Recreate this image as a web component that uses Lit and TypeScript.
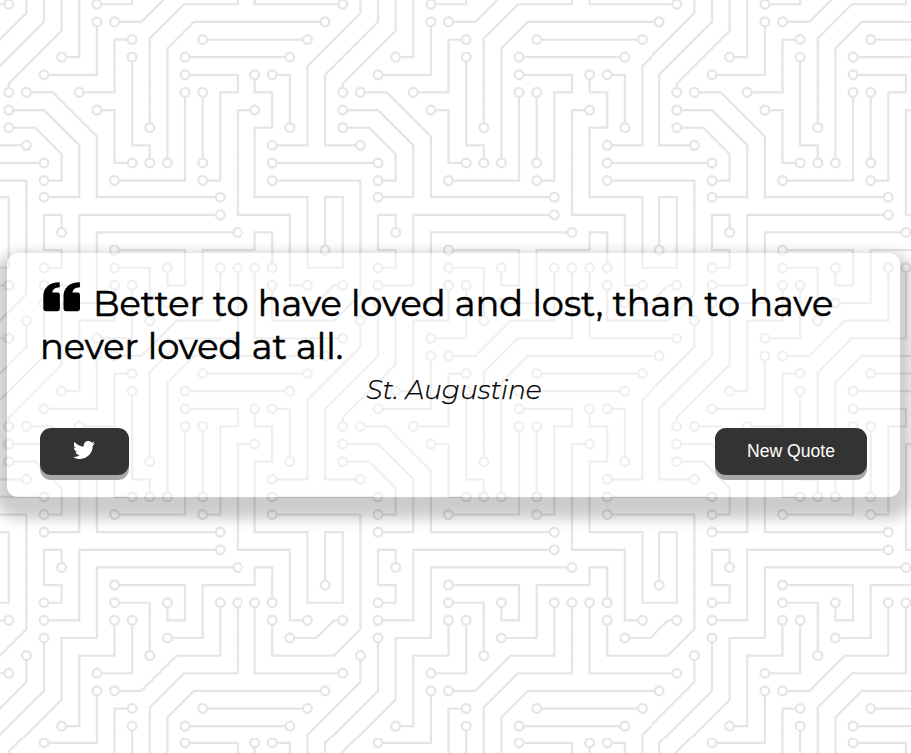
import { LitElement, html, css, unsafeCSS } from "lit";
import { customElement, property } from "lit/decorators.js";

// Circuit traces: 2px lines that end in 5px terminals, on a 304px tile.
const TRACES =
  "M44.1 224a5 5 0 1 1 0 2H0v-2h44.1zm160 48a5 5 0 1 1 0 2H82v-2h122.1zm57.8-46a5 5 0 1 1 0-2H304v2h-42.1zm0 16a5 5 0 1 1 0-2H304v2h-42.1zm6.2-114a5 5 0 1 1 0 2h-86.2a5 5 0 1 1 0-2h86.2zm-256-48a5 5 0 1 1 0 2H0v-2h12.1zm185.8 34a5 5 0 1 1 0-2h86.2a5 5 0 1 1 0 2h-86.2zM258 12.1a5 5 0 1 1-2 0V0h2v12.1zm-64 208a5 5 0 1 1-2 0v-54.2a5 5 0 1 1 2 0v54.2zm48-198.2V80h62v2h-64V21.9a5 5 0 1 1 2 0zm16 16V64h46v2h-48V37.9a5 5 0 1 1 2 0zm-128 96V208h16v12.1a5 5 0 1 1-2 0V210h-16v-76.1a5 5 0 1 1 2 0zm-5.9-21.9a5 5 0 1 1 0 2H114v48H85.9a5 5 0 1 1 0-2H112v-48h12.1zm-6.2 130a5 5 0 1 1 0-2H176v-74.1a5 5 0 1 1 2 0V242h-60.1zm-16-64a5 5 0 1 1 0-2H114v48h10.1a5 5 0 1 1 0 2H112v-48h-10.1zM66 284.1a5 5 0 1 1-2 0V274H50v30h-2v-32h18v12.1zM236.1 176a5 5 0 1 1 0 2H226v94h48v32h-2v-30h-48v-98h12.1zm25.8-30a5 5 0 1 1 0-2H274v44.1a5 5 0 1 1-2 0V146h-10.1zm-64 96a5 5 0 1 1 0-2H208v-80h16v-14h-42.1a5 5 0 1 1 0-2H226v18h-16v80h-12.1zm86.2-210a5 5 0 1 1 0 2H272V0h2v32h10.1zM98 101.9V146H53.9a5 5 0 1 1 0-2H96v-42.1a5 5 0 1 1 2 0zM53.9 34a5 5 0 1 1 0-2H80V0h2v34H53.9zm60.1 3.9V66H82v64H69.9a5 5 0 1 1 0-2H80V64h32V37.9a5 5 0 1 1 2 0zM101.9 82a5 5 0 1 1 0-2H128V37.9a5 5 0 1 1 2 0V82h-28.1zm16-64a5 5 0 1 1 0-2H146v44.1a5 5 0 1 1-2 0V18h-26.1zm102.2 270a5 5 0 1 1 0 2H98v14h-2v-16h124.1zM242 149.9V160h16v34h-16v62h48v48h-2v-46h-48v-66h16v-30h-16v-12.1a5 5 0 1 1 2 0zM53.9 18a5 5 0 1 1 0-2H64V2H48V0h18v18H53.9zm112 32a5 5 0 1 1 0-2H192V0h50v2h-48v48h-28.1zm-48-48a5 5 0 0 1-9.8-2h2.07a3 3 0 1 0 5.66 0H178v34h-18V21.9a5 5 0 1 1 2 0V32h14V2h-58.1zm0 96a5 5 0 1 1 0-2H137l32-32h39V21.9a5 5 0 1 1 2 0V66h-40.17l-32 32H117.9zm28.1 90.1a5 5 0 1 1-2 0v-76.51L175.59 80H224V21.9a5 5 0 1 1 2 0V82h-49.59L146 112.41v75.69zm16 32a5 5 0 1 1-2 0v-99.51L184.59 96H300.1a5 5 0 0 1 3.9-3.9v2.07a3 3 0 0 0 0 5.66v2.07a5 5 0 0 1-3.9-3.9H185.41L162 121.41v98.69zm-144-64a5 5 0 1 1-2 0v-3.51l48-48V48h32V0h2v50H66v55.41l-48 48v2.69zM50 53.9v43.51l-48 48V208h26.1a5 5 0 1 1 0 2H0v-65.41l48-48V53.9a5 5 0 1 1 2 0zm-16 16V89.41l-34 34v-2.82l32-32V69.9a5 5 0 1 1 2 0zM12.1 32a5 5 0 1 1 0 2H9.41L0 43.41V40.6L8.59 32h3.51zm265.8 18a5 5 0 1 1 0-2h18.69l7.41-7.41v2.82L297.41 50H277.9zm-16 160a5 5 0 1 1 0-2H288v-71.41l16-16v2.82l-14 14V210h-28.1zm-208 32a5 5 0 1 1 0-2H64v-22.59L40.59 194H21.9a5 5 0 1 1 0-2H41.41L66 216.59V242H53.9zm150.2 14a5 5 0 1 1 0 2H96v-56.6L56.6 162H37.9a5 5 0 1 1 0-2h19.5L98 200.6V256h106.1zm-150.2 2a5 5 0 1 1 0-2H80v-46.59L48.59 178H21.9a5 5 0 1 1 0-2H49.41L82 208.59V258H53.9zM34 39.8v1.61L9.41 66H0v-2h8.59L32 40.59V0h2v39.8zM2 300.1a5 5 0 0 1 3.9 3.9H3.83A3 3 0 0 0 0 302.17V256h18v48h-2v-46H2v42.1zM34 241v63h-2v-62H0v-2h34v1zM17 18H0v-2h16V0h2v18h-1zm273-2h14v2h-16V0h2v16zm-32 273v15h-2v-14h-14v14h-2v-16h18v1zM0 92.1A5.02 5.02 0 0 1 6 97a5 5 0 0 1-6 4.9v-2.07a3 3 0 1 0 0-5.66V92.1zM80 272h2v32h-2v-32zm37.9 32h-2.07a3 3 0 0 0-5.66 0h-2.07a5 5 0 0 1 9.8 0zM5.9 0A5.02 5.02 0 0 1 0 5.9V3.83A3 3 0 0 0 3.83 0H5.9zm294.2 0h2.07A3 3 0 0 0 304 3.83V5.9a5 5 0 0 1-3.9-5.9zm3.9 300.1v2.07a3 3 0 0 0-1.83 1.83h-2.07a5 5 0 0 1 3.9-3.9z";

// Punches a 3px hole, wound the other way, into the centre of each terminal.
const board = TRACES.replace(/a5 5 0 1 1 ?(-?\d+)[ ]?(-?\d+)/g, (arc, x, y) => {
  const cx = +x / 2 + 2.45 * +y;
  const cy = +y / 2 - 2.45 * +x;
  return `l${cx - 3} ${cy}a3 3 0 1 0 6 0a3 3 0 1 0-6 0l${3 - cx} ${-cy}${arc}`;
});

const tile = encodeURIComponent(
  `<svg xmlns="http://www.w3.org/2000/svg" viewBox="0 0 304 304" width="304" height="304" preserveAspectRatio="none"><path fill="#000" fill-opacity=".1" d="${board}"/></svg>`
);

@customElement("quote-card")
export class QuoteCard extends LitElement {
  @property({ attribute: false }) lines: string[] = [];
  @property() author = "";

  static styles = css`
    :host {
      display: block;
      box-sizing: border-box;
      height: 244px;
      padding: 29px 33px 22px;
      border-radius: 11px;
      background: rgba(255, 255, 255, 0.4);
      box-shadow: 0 11px 13px 11px rgba(0, 0, 0, 0.2);
      color: #000;
      font-family: Montserrat, Inter, sans-serif;
    }
    .quote {
      margin: 0;
      font-size: 35.2px;
      font-weight: 400;
      line-height: 43px;
      white-space: nowrap;
      -webkit-text-stroke: 0.6px #000;
    }
    .line {
      display: flex;
      height: 43px;
    }
    .mark {
      width: 37px;
      height: 30px;
      margin: 0 13px 0 3px;
      flex: none;
    }
    .author {
      margin: 0;
      height: 43px;
      padding-left: 1px;
      line-height: 43px;
      text-align: center;
      font-size: 26.6px;
      font-weight: 300;
      font-style: italic;
      -webkit-text-stroke: 0.25px #000;
    }
    .actions {
      display: flex;
      justify-content: space-between;
      margin-top: 17px;
    }
    button {
      height: 47px;
      padding: 0;
      border: 0;
      border-radius: 11px;
      background: #333;
      box-shadow: 0 5px #a8a8a8;
      color: #fff;
      font: 17.6px/42px "Liberation Sans", Arial, sans-serif;
    }
    .share {
      width: 89px;
    }
    .next {
      width: 152px;
      padding-bottom: 2px;
    }
    .bird {
      display: block;
      width: 22px;
      height: 22px;
      margin: -3px auto 0 33px;
    }
  `;

  render() {
    return html`
      <blockquote class="quote">
        ${this.lines.map(
          (line, i) => html`<div class="line">
            ${i === 0
              ? html`<svg class="mark" viewBox="0 0 37 30">
                  <path d="M16.700 0.200V5.200C12.500 5.400 9.500 7 9.300 10.600H14.700Q16.900 10.600 16.900 13V26.800Q16.900 29.200 14.500 29.200H2.700Q.3 29.200.3 26.800V14C.3 6 6 0.200 16.700 0.200zM36.900 0.200V5.200C32.700 5.400 29.700 7 29.500 10.600H34.900Q37 10.600 37 13V26.800Q37 29.200 34.700 29.200H22.900Q20.500 29.200 20.500 26.800V14C20.500 6 26.200 0.200 36.900 0.200z" />
                </svg>`
              : null}<span>${line}</span>
          </div>`
        )}
      </blockquote>
      <p class="author">${this.author}</p>
      <div class="actions">
        <button class="share" aria-label="Tweet">
          <svg class="bird" viewBox="0 0 512 512" fill="currentColor">
            <path d="M459.370 151.716c.325 4.548.325 9.097.325 13.645 0 138.720-105.583 298.558-298.558 298.558-59.452 0-114.680-17.219-161.137-47.106 8.447.974 16.568 1.299 25.340 1.299 49.055 0 94.213-16.568 130.274-44.832-46.132-.975-84.792-31.188-98.112-72.772 6.498.974 12.995 1.624 19.818 1.624 9.421 0 18.843-1.300 27.614-3.573-48.081-9.747-84.143-51.980-84.143-102.985v-1.299c13.969 7.797 30.214 12.670 47.431 13.319-28.264-18.843-46.781-51.005-46.781-87.391 0-19.492 5.197-37.360 14.294-52.954 51.655 63.675 129.300 105.258 216.365 109.807-1.624-7.797-2.599-15.918-2.599-24.040 0-57.828 46.782-104.934 104.934-104.934 30.213 0 57.502 12.670 76.670 33.137 23.715-4.548 46.456-13.320 66.599-25.340-7.798 24.366-24.366 44.833-46.132 57.827 21.117-2.273 41.584-8.122 60.426-16.243-14.292 20.791-32.161 39.308-52.628 54.253z" />
          </svg>
        </button>
        <button class="next">New Quote</button>
      </div>
    `;
  }
}

@customElement("app-root")
export class AppRoot extends LitElement {
  static styles = css`
    :host {
      display: flex;
      align-items: center;
      box-sizing: border-box;
      height: 100vh;
      padding: 0 11px 3px 7px;
      overflow: hidden;
      background: #fff url("data:image/svg+xml,${unsafeCSS(tile)}") -9.900px -85px / 334.200px 334.400px;
    }
    quote-card {
      flex: 1;
    }
  `;

  render() {
    return html`<quote-card
      .lines=${["Better to have loved and lost, than to have", "never loved at all."]}
      author="St. Augustine"
    ></quote-card>`;
  }
}
